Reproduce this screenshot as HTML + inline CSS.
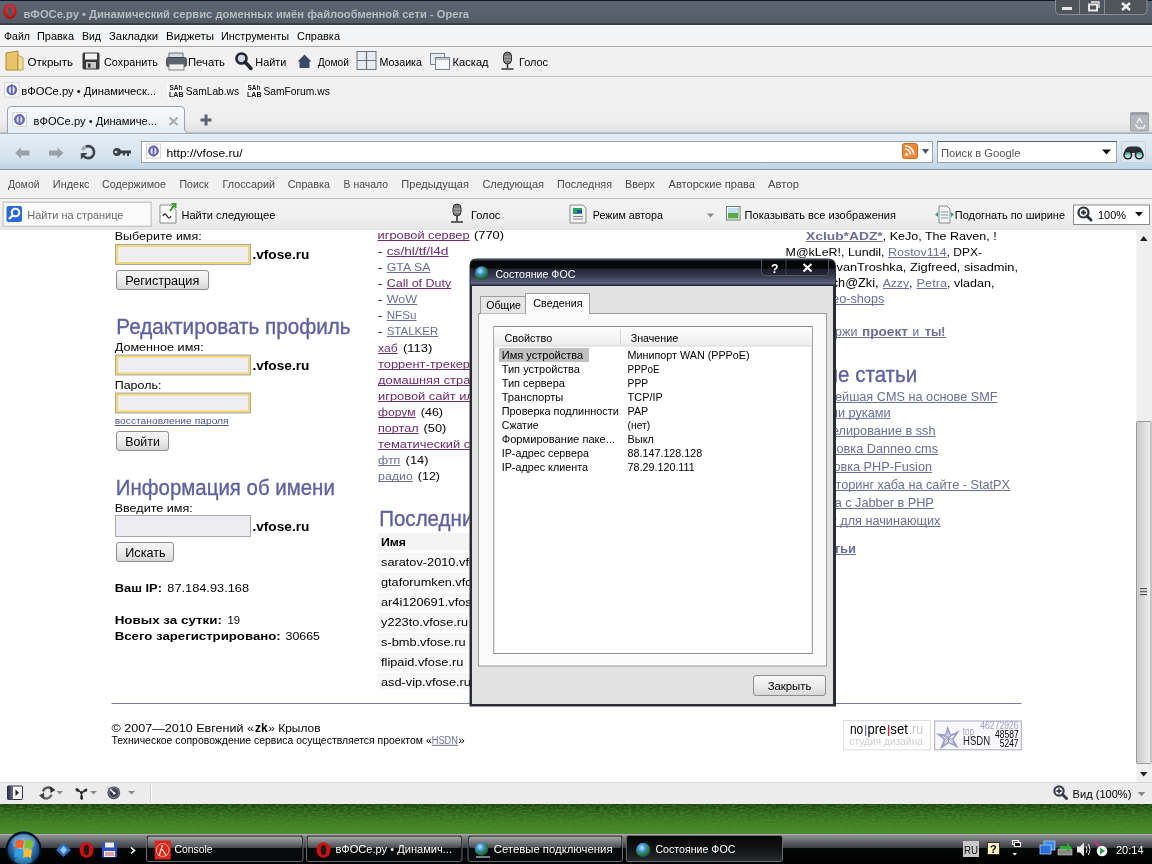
<!DOCTYPE html>
<html><head><meta charset="utf-8"><title>vfose</title>
<style>html,body{margin:0;padding:0;width:1152px;height:864px;overflow:hidden;background:#fff}svg{display:block;will-change:transform}text{font-family:"Liberation Sans",sans-serif;white-space:pre}</style>
</head><body><svg width="1152" height="864" viewBox="0 0 1152 864">
<defs>
<linearGradient id="gTitle" x1="0" y1="0" x2="0" y2="1"><stop offset="0" stop-color="#121a26"/><stop offset="0.045" stop-color="#121a26"/><stop offset="0.06" stop-color="#5c6672"/><stop offset="0.5" stop-color="#58616d"/><stop offset="0.92" stop-color="#525a66"/><stop offset="0.94" stop-color="#3c4046"/><stop offset="1" stop-color="#3c4046"/></linearGradient>
<linearGradient id="gAddr" x1="0" y1="0" x2="0" y2="1"><stop offset="0" stop-color="#e4edf5"/><stop offset="0.6" stop-color="#d8e5ef"/><stop offset="1" stop-color="#bdd3e4"/></linearGradient>
<linearGradient id="gTabBar" x1="0" y1="0" x2="0" y2="1"><stop offset="0" stop-color="#f1f1f1"/><stop offset="0.6" stop-color="#eeeeee"/><stop offset="1" stop-color="#dedede"/></linearGradient>
<linearGradient id="gTab" x1="0" y1="0" x2="0" y2="1"><stop offset="0" stop-color="#fafafa"/><stop offset="1" stop-color="#e4edf5"/></linearGradient>
<linearGradient id="gDesk" x1="0" y1="0" x2="0" y2="1"><stop offset="0" stop-color="#1a4010"/><stop offset="0.25" stop-color="#2c6018"/><stop offset="0.6" stop-color="#3f7e22"/><stop offset="1" stop-color="#4c8e2c"/></linearGradient>
<filter id="fGrass" x="0" y="0" width="100%" height="100%"><feTurbulence type="fractalNoise" baseFrequency="0.25 0.6" numOctaves="3" seed="7"/><feColorMatrix values="0 0 0 0 0.08  0 0 0 0 0.25  0 0 0 0 0.04  0 0 0 -3 1.9"/></filter>
<linearGradient id="gTask" x1="0" y1="0" x2="0" y2="1"><stop offset="0" stop-color="#9a9ca2"/><stop offset="0.1" stop-color="#808388"/><stop offset="0.45" stop-color="#3c3e43"/><stop offset="0.48" stop-color="#060708"/><stop offset="1" stop-color="#000"/></linearGradient>
<linearGradient id="gTBtn" x1="0" y1="0" x2="0" y2="1"><stop offset="0" stop-color="#6d7077"/><stop offset="0.5" stop-color="#45484e"/><stop offset="0.52" stop-color="#1a1c1f"/><stop offset="1" stop-color="#121315"/></linearGradient>
<linearGradient id="gDlgTitle" x1="0" y1="0" x2="0" y2="1"><stop offset="0" stop-color="#5a5e72"/><stop offset="0.06" stop-color="#06070c"/><stop offset="0.3" stop-color="#080906"/><stop offset="0.38" stop-color="#25263a"/><stop offset="0.6" stop-color="#33384a"/><stop offset="0.9" stop-color="#5e6382"/><stop offset="0.96" stop-color="#3a3c48"/><stop offset="1" stop-color="#15161a"/></linearGradient>
<linearGradient id="gBtn" x1="0" y1="0" x2="0" y2="1"><stop offset="0" stop-color="#f8f8f8"/><stop offset="0.5" stop-color="#ececec"/><stop offset="1" stop-color="#d6d6d6"/></linearGradient>
<linearGradient id="gHdr" x1="0" y1="0" x2="0" y2="1"><stop offset="0" stop-color="#ffffff"/><stop offset="1" stop-color="#ececec"/></linearGradient>
<linearGradient id="gThumb" x1="0" y1="0" x2="1" y2="0"><stop offset="0" stop-color="#c8c8c8"/><stop offset="0.5" stop-color="#dcdcdc"/><stop offset="1" stop-color="#f0f0f0"/></linearGradient>
<radialGradient id="gGlobe" cx="0.4" cy="0.35" r="0.7"><stop offset="0" stop-color="#bfe6ff"/><stop offset="0.4" stop-color="#3a8fd0"/><stop offset="0.7" stop-color="#2e7a2e"/><stop offset="1" stop-color="#0c3a6a"/></radialGradient>
<radialGradient id="gOrb" cx="0.5" cy="0.4" r="0.6"><stop offset="0" stop-color="#9fd6f5"/><stop offset="0.6" stop-color="#2a6fb0"/><stop offset="1" stop-color="#0c2a4a"/></radialGradient>
<radialGradient id="gOpera" cx="0.5" cy="0.4" r="0.6"><stop offset="0" stop-color="#ff5050"/><stop offset="1" stop-color="#b00000"/></radialGradient>
<linearGradient id="gTBtnTop" x1="0" y1="0" x2="0" y2="1"><stop offset="0" stop-color="#a8aaae"/><stop offset="1" stop-color="#45474b"/></linearGradient>
<linearGradient id="gPanel" x1="0" y1="0" x2="1" y2="0"><stop offset="0" stop-color="#2a2e48"/><stop offset="1" stop-color="#6a6e90"/></linearGradient>
<linearGradient id="gTBtnAct" x1="0" y1="0" x2="0" y2="1"><stop offset="0" stop-color="#050505"/><stop offset="0.6" stop-color="#151618"/><stop offset="1" stop-color="#2a2b2e"/></linearGradient>
<linearGradient id="gFind" x1="0" y1="0" x2="0" y2="1"><stop offset="0" stop-color="#f2f2f2"/><stop offset="0.6" stop-color="#f0f0f0"/><stop offset="1" stop-color="#e6e6e6"/></linearGradient>
<linearGradient id="gLens" x1="0" y1="0" x2="0" y2="1"><stop offset="0" stop-color="#2a9a88"/><stop offset="1" stop-color="#f0fffa"/></linearGradient>
</defs>
<rect x="0" y="0" width="1152" height="864" fill="#ffffff" />
<text x="114.7" y="240" font-size="11.5" fill="#000" textLength="87.0" lengthAdjust="spacingAndGlyphs" >Выберите имя:</text>
<rect x="115" y="244" width="136" height="21" fill="#a9a9a9" />
<rect x="116" y="245" width="134" height="19" fill="#f3d675" />
<rect x="118" y="247" width="130" height="15" fill="#eeeef3" />
<text x="252.4" y="259" font-size="13" fill="#000" font-weight="bold" textLength="57.0" lengthAdjust="spacingAndGlyphs" >.vfose.ru</text>
<rect x="116.5" y="270.5" width="92" height="19" rx="2.5" fill="url(#gBtn)" stroke="#8e8e8e"/>
<text x="125.3" y="284.7" font-size="12" fill="#000" textLength="74.0" lengthAdjust="spacingAndGlyphs" >Регистрация</text>
<text x="116.3" y="333.5" font-size="21.4" fill="#5f619f" textLength="234.3" lengthAdjust="spacingAndGlyphs" stroke="#5f619f" stroke-width="0.35">Редактировать профиль</text>
<text x="114.7" y="350.7" font-size="11.5" fill="#000" textLength="89.0" lengthAdjust="spacingAndGlyphs" >Доменное имя:</text>
<rect x="115" y="354.5" width="136" height="21" fill="#a9a9a9" />
<rect x="116" y="355.5" width="134" height="19" fill="#f3d675" />
<rect x="118" y="357.5" width="130" height="15" fill="#eeeef3" />
<text x="252.4" y="369.5" font-size="13" fill="#000" font-weight="bold" textLength="57.0" lengthAdjust="spacingAndGlyphs" >.vfose.ru</text>
<text x="114.7" y="389" font-size="11.5" fill="#000" textLength="46.7" lengthAdjust="spacingAndGlyphs" >Пароль:</text>
<rect x="115" y="392.5" width="136" height="21" fill="#a9a9a9" />
<rect x="116" y="393.5" width="134" height="19" fill="#f3d675" />
<rect x="118" y="395.5" width="130" height="15" fill="#eeeef3" />
<text x="114.7" y="424" font-size="9" fill="#50538a" textLength="114.0" lengthAdjust="spacingAndGlyphs" >восстановление пароля</text>
<rect x="114.7" y="425" width="114" height="1" fill="#50538a" />
<rect x="116.5" y="431.5" width="52" height="19" rx="2.5" fill="url(#gBtn)" stroke="#8e8e8e"/>
<text x="125.3" y="445.5" font-size="12" fill="#000" textLength="34.5" lengthAdjust="spacingAndGlyphs" >Войти</text>
<text x="115.8" y="494.8" font-size="21.4" fill="#5f619f" textLength="219.0" lengthAdjust="spacingAndGlyphs" stroke="#5f619f" stroke-width="0.35">Информация об имени</text>
<text x="114.7" y="511.5" font-size="11.5" fill="#000" textLength="78.0" lengthAdjust="spacingAndGlyphs" >Введите имя:</text>
<rect x="115" y="515" width="136" height="22" fill="#a9a9a9" />
<rect x="116" y="516" width="134" height="20" fill="#ededf1" />
<text x="252.4" y="531" font-size="13" fill="#000" font-weight="bold" textLength="57.0" lengthAdjust="spacingAndGlyphs" >.vfose.ru</text>
<rect x="116.5" y="542.5" width="57" height="19" rx="2.5" fill="url(#gBtn)" stroke="#8e8e8e"/>
<text x="125.3" y="556.6" font-size="12" fill="#000" textLength="40.2" lengthAdjust="spacingAndGlyphs" >Искать</text>
<text x="114.7" y="592" font-size="11.5" fill="#000" font-weight="bold" textLength="47.3" lengthAdjust="spacingAndGlyphs" >Ваш IP:</text>
<text x="167.3" y="592" font-size="11.5" fill="#000" textLength="81.7" lengthAdjust="spacingAndGlyphs" >87.184.93.168</text>
<text x="114.7" y="623.7" font-size="11.5" fill="#000" font-weight="bold" textLength="107.3" lengthAdjust="spacingAndGlyphs" >Новых за сутки:</text>
<text x="227.5" y="623.7" font-size="11.5" fill="#000" textLength="12.5" lengthAdjust="spacingAndGlyphs" >19</text>
<text x="114.7" y="639.5" font-size="11.5" fill="#000" font-weight="bold" textLength="166.0" lengthAdjust="spacingAndGlyphs" >Всего зарегистрировано:</text>
<text x="285.5" y="639.5" font-size="11.5" fill="#000" textLength="34.5" lengthAdjust="spacingAndGlyphs" >30665</text>
<text x="377.6" y="239.2" font-size="11.5" fill="#6e2a72" textLength="92.0" lengthAdjust="spacingAndGlyphs" >игровой сервер</text>
<rect x="377.6" y="240" width="92" height="1" fill="#6e2a72" />
<text x="474" y="239.2" font-size="11.5" fill="#000" textLength="30.0" lengthAdjust="spacingAndGlyphs" >(770)</text>
<text x="378" y="255.2" font-size="11.5" fill="#000" textLength="4.5" lengthAdjust="spacingAndGlyphs" >-</text>
<text x="386.7" y="255.2" font-size="11.5" fill="#6e2a72" textLength="61.8" lengthAdjust="spacingAndGlyphs" >cs/hl/tf/l4d</text>
<rect x="386.7" y="256" width="61.8" height="1" fill="#6e2a72" />
<text x="378" y="271" font-size="11.5" fill="#000" textLength="4.5" lengthAdjust="spacingAndGlyphs" >-</text>
<text x="386.7" y="271" font-size="11.5" fill="#6b6e9b" textLength="43.7" lengthAdjust="spacingAndGlyphs" >GTA SA</text>
<rect x="386.7" y="272" width="43.7" height="1" fill="#6b6e9b" />
<text x="378" y="287" font-size="11.5" fill="#000" textLength="4.5" lengthAdjust="spacingAndGlyphs" >-</text>
<text x="386.7" y="287" font-size="11.5" fill="#6e2a72" textLength="64.5" lengthAdjust="spacingAndGlyphs" >Call of Duty</text>
<rect x="386.7" y="288" width="64.5" height="1" fill="#6e2a72" />
<text x="378" y="303" font-size="11.5" fill="#000" textLength="4.5" lengthAdjust="spacingAndGlyphs" >-</text>
<text x="386.7" y="303" font-size="11.5" fill="#6b6e9b" textLength="30.5" lengthAdjust="spacingAndGlyphs" >WoW</text>
<rect x="386.7" y="304" width="30.5" height="1" fill="#6b6e9b" />
<text x="378" y="319" font-size="11.5" fill="#000" textLength="4.5" lengthAdjust="spacingAndGlyphs" >-</text>
<text x="386.7" y="319" font-size="11.5" fill="#6b6e9b" textLength="29.8" lengthAdjust="spacingAndGlyphs" >NFSu</text>
<rect x="386.7" y="320" width="29.8" height="1" fill="#6b6e9b" />
<text x="378" y="335" font-size="11.5" fill="#000" textLength="4.5" lengthAdjust="spacingAndGlyphs" >-</text>
<text x="386.7" y="335" font-size="11.5" fill="#6b6e9b" textLength="51.6" lengthAdjust="spacingAndGlyphs" >STALKER</text>
<rect x="386.7" y="336" width="51.6" height="1" fill="#6b6e9b" />
<text x="378" y="351.7" font-size="11.5" fill="#6e2a72" textLength="19.6" lengthAdjust="spacingAndGlyphs" >хаб</text>
<rect x="378" y="353" width="19.6" height="1" fill="#6e2a72" />
<text x="403" y="351.7" font-size="11.5" fill="#000" textLength="29.4" lengthAdjust="spacingAndGlyphs" >(113)</text>
<text x="378" y="367.7" font-size="11.5" fill="#6e2a72" textLength="118.5" lengthAdjust="spacingAndGlyphs" >торрент-трекер (99)</text>
<rect x="378" y="369" width="95" height="1" fill="#6e2a72" />
<text x="378" y="383.6" font-size="11.5" fill="#6e2a72" textLength="147.6" lengthAdjust="spacingAndGlyphs" >домашняя страница (80)</text>
<rect x="378" y="385" width="95" height="1" fill="#6e2a72" />
<text x="378" y="399.6" font-size="11.5" fill="#6e2a72" textLength="160.7" lengthAdjust="spacingAndGlyphs" >игровой сайт или клан (60)</text>
<rect x="378" y="401" width="95" height="1" fill="#6e2a72" />
<text x="378" y="415.6" font-size="11.5" fill="#6e2a72" textLength="37.5" lengthAdjust="spacingAndGlyphs" >форум</text>
<rect x="378" y="417" width="37.5" height="1" fill="#6e2a72" />
<text x="420.8" y="415.6" font-size="11.5" fill="#000" textLength="22.2" lengthAdjust="spacingAndGlyphs" >(46)</text>
<text x="378" y="431.6" font-size="11.5" fill="#6e2a72" textLength="40.5" lengthAdjust="spacingAndGlyphs" >портал</text>
<rect x="378" y="433" width="40.5" height="1" fill="#6e2a72" />
<text x="423.5" y="431.6" font-size="11.5" fill="#000" textLength="22.8" lengthAdjust="spacingAndGlyphs" >(50)</text>
<text x="378" y="447.6" font-size="11.5" fill="#6e2a72" textLength="138.9" lengthAdjust="spacingAndGlyphs" >тематический сайт (40)</text>
<rect x="378" y="449" width="95" height="1" fill="#6e2a72" />
<text x="378" y="463.6" font-size="11.5" fill="#6b6e9b" textLength="22.3" lengthAdjust="spacingAndGlyphs" >фтп</text>
<rect x="378" y="465" width="22.3" height="1" fill="#6b6e9b" />
<text x="405.6" y="463.6" font-size="11.5" fill="#000" textLength="22.9" lengthAdjust="spacingAndGlyphs" >(14)</text>
<text x="378" y="479.6" font-size="11.5" fill="#6b6e9b" textLength="34.8" lengthAdjust="spacingAndGlyphs" >радио</text>
<rect x="378" y="481" width="34.8" height="1" fill="#6b6e9b" />
<text x="417.8" y="479.6" font-size="11.5" fill="#000" textLength="22.2" lengthAdjust="spacingAndGlyphs" >(12)</text>
<text x="379.2" y="525.5" font-size="21.4" fill="#5f619f" textLength="230.3" lengthAdjust="spacingAndGlyphs" stroke="#5f619f" stroke-width="0.35">Последние регистрации</text>
<rect x="378" y="533" width="380" height="17" fill="#f4f4f4" />
<text x="381" y="545.7" font-size="11.5" fill="#000" font-weight="bold" textLength="25.0" lengthAdjust="spacingAndGlyphs" >Имя</text>
<rect x="378" y="553" width="380" height="17" fill="#f7f7f7" />
<text x="381" y="566" font-size="11.5" fill="#000" textLength="123.4" lengthAdjust="spacingAndGlyphs">saratov-2010.vfose.ru</text>
<rect x="378" y="573" width="380" height="17" fill="#f7f7f7" />
<text x="381" y="586" font-size="11.5" fill="#000" transform="translate(381,0) scale(1.11,1) translate(-381,0)">gtaforumken.vfose.ru</text>
<rect x="378" y="593" width="380" height="17" fill="#f7f7f7" />
<text x="381" y="606" font-size="11.5" fill="#000" transform="translate(381,0) scale(1.11,1) translate(-381,0)">ar4i120691.vfose.ru</text>
<rect x="378" y="613" width="380" height="17" fill="#f7f7f7" />
<text x="381" y="626" font-size="11.5" fill="#000" textLength="87.2" lengthAdjust="spacingAndGlyphs">y223to.vfose.ru</text>
<rect x="378" y="633" width="380" height="17" fill="#f7f7f7" />
<text x="381" y="646" font-size="11.5" fill="#000" textLength="84.5" lengthAdjust="spacingAndGlyphs">s-bmb.vfose.ru</text>
<rect x="378" y="653" width="380" height="17" fill="#f7f7f7" />
<text x="381" y="666" font-size="11.5" fill="#000" textLength="82.3" lengthAdjust="spacingAndGlyphs">flipaid.vfose.ru</text>
<rect x="378" y="673" width="380" height="17" fill="#f7f7f7" />
<text x="381" y="686" font-size="11.5" fill="#000" transform="translate(381,0) scale(1.11,1) translate(-381,0)">asd-vip.vfose.ru</text>
<rect x="111.5" y="703" width="910" height="1" fill="#7a7a9a" />
<text x="111.5" y="732" font-size="11.5" fill="#000" textLength="142.5" lengthAdjust="spacingAndGlyphs" >© 2007—2010 Евгений «</text>
<text x="255" y="732" font-size="12" fill="#000" font-weight="bold" textLength="12.7" lengthAdjust="spacingAndGlyphs" >zk</text>
<text x="268.3" y="732" font-size="11.5" fill="#000" textLength="52.2" lengthAdjust="spacingAndGlyphs" >» Крылов</text>
<text x="111.5" y="743.8" font-size="10" fill="#000" textLength="320.2" lengthAdjust="spacingAndGlyphs" >Техническое сопровождение сервиса осуществляется проектом «</text>
<text x="431.7" y="743.8" font-size="10" fill="#6b6e9b" textLength="26.3" lengthAdjust="spacingAndGlyphs" >HSDN</text>
<text x="458.2" y="743.8" font-size="10" fill="#000" textLength="6.5" lengthAdjust="spacingAndGlyphs" >»</text>
<rect x="431.7" y="744.8" width="26.3" height="1" fill="#6b6e9b" />
<text x="806" y="239.5" font-size="11.5" fill="#6b6e9b" font-weight="bold" textLength="76.7" lengthAdjust="spacingAndGlyphs" >Xclub*ADZ*</text>
<rect x="806" y="241" width="76.7" height="1" fill="#6b6e9b" />
<text x="882.7" y="239.5" font-size="11.5" fill="#000" textLength="114.0" lengthAdjust="spacingAndGlyphs" >, KeJo, The Raven, !</text>
<text x="785.6" y="256" font-size="11.5" fill="#000" textLength="102.4" lengthAdjust="spacingAndGlyphs" >M@kLeR!, Lundil, </text>
<text x="888" y="256" font-size="11.5" fill="#6b6e9b" textLength="58.6" lengthAdjust="spacingAndGlyphs" >Rostov114</text>
<rect x="888" y="257" width="58.6" height="1" fill="#6b6e9b" />
<text x="946.6" y="256" font-size="11.5" fill="#000" textLength="35.4" lengthAdjust="spacingAndGlyphs" >, DPX-</text>
<text x="836.5" y="271" font-size="11.5" fill="#000" textLength="181.5" lengthAdjust="spacingAndGlyphs" >vanTroshka, Zigfreed, sisadmin,</text>
<text x="882" y="287" font-size="12.7" fill="#000" text-anchor="end" >Scratch@Zki, </text>
<text x="882.7" y="287" font-size="11.5" fill="#6b6e9b" textLength="26.3" lengthAdjust="spacingAndGlyphs" >Azzy</text>
<rect x="882.7" y="288" width="26.3" height="1" fill="#6b6e9b" />
<text x="909" y="287" font-size="11.5" fill="#000" textLength="7.0" lengthAdjust="spacingAndGlyphs" >, </text>
<text x="916.6" y="287" font-size="11.5" fill="#6b6e9b" textLength="30.4" lengthAdjust="spacingAndGlyphs" >Petra</text>
<rect x="916.6" y="288" width="30.4" height="1" fill="#6b6e9b" />
<text x="947" y="287" font-size="11.5" fill="#000" textLength="47.4" lengthAdjust="spacingAndGlyphs" >, vladan,</text>
<text x="884.3" y="303" font-size="12.7" fill="#6b6e9b" text-anchor="end" >video-shops</text>
<rect x="800" y="304" width="84.3" height="1" fill="#6b6e9b" />
<text x="857.4" y="335.5" font-size="12.5" fill="#6b6e9b" text-anchor="end" >Поддержи</text>
<text x="862" y="335.5" font-size="13" fill="#6b6e9b" font-weight="bold" textLength="45.9" lengthAdjust="spacingAndGlyphs" >проект</text>
<text x="912.6" y="335.5" font-size="12" fill="#6b6e9b" textLength="6.7" lengthAdjust="spacingAndGlyphs" >и</text>
<text x="925" y="335.5" font-size="13" fill="#6b6e9b" font-weight="bold" textLength="20.4" lengthAdjust="spacingAndGlyphs" >ты!</text>
<rect x="800" y="337" width="146" height="1" fill="#6b6e9b" />
<text x="917.2" y="381.5" font-size="21.4" fill="#5f619f" text-anchor="end" textLength="173.3" lengthAdjust="spacingAndGlyphs" stroke="#5f619f" stroke-width="0.35">Последние статьи</text>
<text x="997.5" y="401" font-size="12.7" fill="#6b6e9b" text-anchor="end" >Простейшая CMS на основе SMF</text>
<rect x="800" y="402" width="197.5" height="1" fill="#6b6e9b" />
<text x="890.5" y="416.8" font-size="12.7" fill="#6b6e9b" text-anchor="end" >своими руками</text>
<rect x="800" y="417.8" width="90.5" height="1" fill="#6b6e9b" />
<text x="935.5" y="435" font-size="12.7" fill="#6b6e9b" text-anchor="end" >Туннелирование в ssh</text>
<rect x="800" y="436" width="135.5" height="1" fill="#6b6e9b" />
<text x="938" y="453" font-size="12.7" fill="#6b6e9b" text-anchor="end" >Установка Danneo cms</text>
<rect x="800" y="454" width="138" height="1" fill="#6b6e9b" />
<text x="932" y="471" font-size="12.7" fill="#6b6e9b" text-anchor="end" >Установка PHP-Fusion</text>
<rect x="800" y="472" width="132" height="1" fill="#6b6e9b" />
<text x="1010" y="489" font-size="12.7" fill="#6b6e9b" text-anchor="end" >Мониторинг хаба на сайте - StatPX</text>
<rect x="800" y="490" width="210" height="1" fill="#6b6e9b" />
<text x="933.8" y="507" font-size="12.7" fill="#6b6e9b" text-anchor="end" >Работа с Jabber в PHP</text>
<rect x="800" y="508" width="133.79999999999995" height="1" fill="#6b6e9b" />
<text x="940.4" y="525" font-size="12.7" fill="#6b6e9b" text-anchor="end" >PHP для начинающих</text>
<rect x="800" y="526" width="140.39999999999998" height="1" fill="#6b6e9b" />
<text x="856" y="553" font-size="13" fill="#6b6e9b" text-anchor="end" font-weight="bold" >Все статьи</text>
<rect x="800" y="554" width="56" height="1" fill="#6b6e9b" />
<rect x="843" y="720" width="88" height="30.3" fill="#dedede" />
<rect x="844" y="721" width="86" height="28.3" fill="#ffffff" />
<text x="849.9" y="733.9" font-size="14" fill="#000" textLength="13.3" lengthAdjust="spacingAndGlyphs" >no</text>
<rect x="865" y="725" width="1.3" height="11" fill="#6a6cc0" />
<text x="867.5" y="733.9" font-size="14" fill="#000" textLength="18.8" lengthAdjust="spacingAndGlyphs" >pre</text>
<rect x="888" y="725" width="1.3" height="11" fill="#d02030" />
<text x="890.3" y="733.9" font-size="14" fill="#000" textLength="17.6" lengthAdjust="spacingAndGlyphs" >set</text>
<text x="908.7" y="733.9" font-size="14" fill="#c8c8c8" textLength="14.3" lengthAdjust="spacingAndGlyphs" >.ru</text>
<text x="849.3" y="744.8" font-size="10" fill="#d0d0d0" textLength="73.7" lengthAdjust="spacingAndGlyphs" >студия дизайна</text>
<rect x="934.2" y="720.5" width="87.6" height="29.8" fill="#a8aac8" />
<rect x="935.2" y="721.5" width="85.6" height="27.8" fill="#f8f8fc" />
<g transform="translate(948.6,738.4)" stroke="#9a9ccc" stroke-width="1.6" fill="none" stroke-linejoin="miter"><path d="M-1,-10 L2,-3 L9,-6 L4,1 L8,8 L0,4 L-7,9 L-4,1 L-10,-4 L-3,-3 Z"/><path d="M-1,-10 L0,4 M9,-6 L-4,1 M8,8 L-3,-3 M-7,9 L2,-3 M-10,-4 L4,1" stroke-width="1"/></g>
<text x="962.7" y="735.2" font-size="10" fill="#a8a8b8" textLength="11.2" lengthAdjust="spacingAndGlyphs" >top</text>
<text x="963" y="745.2" font-size="12.5" fill="#222" textLength="27.2" lengthAdjust="spacingAndGlyphs" >HSDN</text>
<text x="980.3" y="729.1" font-size="11" fill="#a0a2cc" textLength="38.3" lengthAdjust="spacingAndGlyphs" >46272926</text>
<text x="995" y="738.4" font-size="11" fill="#000" textLength="23.6" lengthAdjust="spacingAndGlyphs" >48587</text>
<text x="999.7" y="747.1" font-size="11" fill="#000" textLength="18.9" lengthAdjust="spacingAndGlyphs" >5247</text>
<path d="M469.5,706.5 L469.5,265.5 Q469.5,258.5 476.5,258.5 L828,258.5 Q836,258.5 836,266.5 L836,706.5 Z" fill="#2a2c33"/>
<path d="M470.5,286 L470.5,265.5 Q470.5,259.5 476.5,259.5 L828,259.5 Q835,259.5 835,266.5 L835,286 Z" fill="url(#gDlgTitle)"/>
<rect x="472" y="286" width="361" height="418" fill="#e2e2e2" />
<circle cx="481.7" cy="273" r="6.8" fill="url(#gGlobe)"/>
<text x="495.4" y="278" font-size="11.5" fill="#ffffff" textLength="80.0" lengthAdjust="spacingAndGlyphs" >Состояние ФОС</text>
<path d="M761.5,259 L761.5,272 Q761.5,275.5 765,275.5 L825,275.5 Q828.5,275.5 828.5,272 L828.5,259" fill="#000" fill-opacity="0.25" stroke="#4e5262"/>
<line x1="786" y1="260" x2="786" y2="275" stroke="#3e4250" stroke-width="1" />
<text x="771" y="272.5" font-size="12" fill="#fff" font-weight="bold" textLength="7.5" lengthAdjust="spacingAndGlyphs" >?</text>
<path d="M803.5,264 L811.5,271.5 M811.5,264 L803.5,271.5" stroke="#fff" stroke-width="2.2"/>
<rect x="478" y="313" width="349" height="353.5" fill="#9d9d9d" />
<rect x="479" y="314" width="347" height="351.5" fill="#fbfbfb" />
<path d="M480.5,313.5 L480.5,296.5 L525.5,296.5 L525.5,313.5" fill="#e6e6e6" stroke="#9d9d9d"/>
<text x="486.3" y="308.5" font-size="11.5" fill="#000" textLength="34.7" lengthAdjust="spacingAndGlyphs" >Общие</text>
<path d="M525.5,314 L525.5,293.5 L589.5,293.5 L589.5,314" fill="#fbfbfb" stroke="#9d9d9d"/>
<rect x="526" y="312" width="63" height="3" fill="#fbfbfb" />
<text x="533.3" y="306.5" font-size="11.5" fill="#000" textLength="49.2" lengthAdjust="spacingAndGlyphs" >Сведения</text>
<rect x="493.3" y="326" width="319.5" height="328" fill="#8e8e8e" />
<rect x="494.3" y="327" width="317.5" height="326" fill="#ffffff" />
<rect x="494.3" y="327" width="317.5" height="19" fill="url(#gHdr)"/>
<rect x="494.3" y="345.5" width="317.5" height="1" fill="#d8d8d8" />
<rect x="620" y="329" width="1" height="16" fill="#d6d6d6" />
<text x="504.4" y="341.5" font-size="11.5" fill="#000" textLength="47.9" lengthAdjust="spacingAndGlyphs" >Свойство</text>
<text x="630.7" y="341.5" font-size="11.5" fill="#000" textLength="47.5" lengthAdjust="spacingAndGlyphs" >Значение</text>
<rect x="499" y="348" width="90" height="14" fill="#c1c1c1" />
<text x="501.7" y="358.6" font-size="11" fill="#000" textLength="81.5" lengthAdjust="spacingAndGlyphs" >Имя устройства</text>
<text x="627.6" y="358.6" font-size="11" fill="#000" textLength="121.9" lengthAdjust="spacingAndGlyphs" >Минипорт WAN (PPPoE)</text>
<text x="501.7" y="372.6" font-size="11" fill="#000" textLength="78.3" lengthAdjust="spacingAndGlyphs" >Тип устройства</text>
<text x="627.6" y="372.6" font-size="11" fill="#000" textLength="32.0" lengthAdjust="spacingAndGlyphs" >PPPoE</text>
<text x="501.7" y="386.6" font-size="11" fill="#000" textLength="63.2" lengthAdjust="spacingAndGlyphs" >Тип сервера</text>
<text x="627.6" y="386.6" font-size="11" fill="#000" textLength="20.6" lengthAdjust="spacingAndGlyphs" >PPP</text>
<text x="501.7" y="400.6" font-size="11" fill="#000" textLength="61.6" lengthAdjust="spacingAndGlyphs" >Транспорты</text>
<text x="627.6" y="400.6" font-size="11" fill="#000" textLength="35.2" lengthAdjust="spacingAndGlyphs" >TCP/IP</text>
<text x="501.7" y="414.6" font-size="11" fill="#000" textLength="117.1" lengthAdjust="spacingAndGlyphs" >Проверка подлинности</text>
<text x="627.6" y="414.6" font-size="11" fill="#000" textLength="20.6" lengthAdjust="spacingAndGlyphs" >PAP</text>
<text x="501.7" y="428.6" font-size="11" fill="#000" textLength="36.9" lengthAdjust="spacingAndGlyphs" >Сжатие</text>
<text x="627.6" y="428.6" font-size="11" fill="#000" textLength="22.7" lengthAdjust="spacingAndGlyphs" >(нет)</text>
<text x="501.7" y="442.6" font-size="11" fill="#000" textLength="113.4" lengthAdjust="spacingAndGlyphs" >Формирование паке...</text>
<text x="627.6" y="442.6" font-size="11" fill="#000" textLength="26.3" lengthAdjust="spacingAndGlyphs" >Выкл</text>
<text x="501.7" y="456.6" font-size="11" fill="#000" textLength="87.2" lengthAdjust="spacingAndGlyphs" >IP-адрес сервера</text>
<text x="627.6" y="456.6" font-size="11" fill="#000" textLength="74.6" lengthAdjust="spacingAndGlyphs" >88.147.128.128</text>
<text x="501.7" y="470.6" font-size="11" fill="#000" textLength="86.3" lengthAdjust="spacingAndGlyphs" >IP-адрес клиента</text>
<text x="627.6" y="470.6" font-size="11" fill="#000" textLength="67.1" lengthAdjust="spacingAndGlyphs" >78.29.120.111</text>
<rect x="753.5" y="675.5" width="72" height="20" rx="2.5" fill="url(#gBtn)" stroke="#8e8e8e"/>
<text x="767.7" y="689.7" font-size="11.5" fill="#000" textLength="43.6" lengthAdjust="spacingAndGlyphs" >Закрыть</text>
<rect x="0" y="0" width="1152" height="25" fill="url(#gTitle)" />
<ellipse cx="10" cy="11.5" rx="6.5" ry="7.5" fill="url(#gOpera)"/><ellipse cx="10" cy="11.5" rx="2.6" ry="5" fill="#52565e"/>
<text x="23.5" y="18" font-size="11" fill="#b8bcc2" font-weight="bold" textLength="445.5" lengthAdjust="spacingAndGlyphs" >вФОСе.ру • Динамический сервис доменных имён файлообменной сети - Opera</text>
<path d="M1055.5,0 L1055.5,10.5 Q1055.5,14.5 1059.5,14.5 L1143,14.5 Q1147,14.5 1147,10.5 L1147,0" fill="#50545b" stroke="#8a8d93"/>
<line x1="1079.5" y1="0" x2="1079.5" y2="14" stroke="#8a8d93" stroke-width="1" />
<line x1="1104.5" y1="0" x2="1104.5" y2="14" stroke="#8a8d93" stroke-width="1" />
<rect x="1062" y="7" width="10" height="3" fill="#e8e8e8" />
<rect x="1089" y="4.5" width="8" height="6" fill="none" stroke="#e8e8e8" stroke-width="2"/><path d="M1091,2 L1099,2 L1099,8" fill="none" stroke="#e8e8e8" stroke-width="1.3"/>
<path d="M1122,3 L1130,10 M1130,3 L1122,10" stroke="#f0f0f0" stroke-width="2.4"/>
<rect x="0" y="25" width="1152" height="21" fill="#f3f4f5" />
<rect x="0" y="25" width="1152" height="1" fill="#fcfdff" />
<rect x="0" y="46" width="1152" height="1" fill="#a8a8a8" />
<text x="4" y="39.5" font-size="11" fill="#000" textLength="26.0" lengthAdjust="spacingAndGlyphs" >Файл</text>
<text x="37" y="39.5" font-size="11" fill="#000" textLength="37.0" lengthAdjust="spacingAndGlyphs" >Правка</text>
<text x="82" y="39.5" font-size="11" fill="#000" textLength="19.0" lengthAdjust="spacingAndGlyphs" >Вид</text>
<text x="109" y="39.5" font-size="11" fill="#000" textLength="49.0" lengthAdjust="spacingAndGlyphs" >Закладки</text>
<text x="166" y="39.5" font-size="11" fill="#000" textLength="48.0" lengthAdjust="spacingAndGlyphs" >Виджеты</text>
<text x="221" y="39.5" font-size="11" fill="#000" textLength="68.0" lengthAdjust="spacingAndGlyphs" >Инструменты</text>
<text x="297" y="39.5" font-size="11" fill="#000" textLength="43.0" lengthAdjust="spacingAndGlyphs" >Справка</text>
<rect x="0" y="47" width="1152" height="29" fill="#f1f1f1" />
<rect x="0" y="76" width="1152" height="1" fill="#c2c2c2" />
<text x="27.5" y="66" font-size="11" fill="#000" textLength="45.5" lengthAdjust="spacingAndGlyphs" >Открыть</text>
<text x="104" y="66" font-size="11" fill="#000" textLength="54.0" lengthAdjust="spacingAndGlyphs" >Сохранить</text>
<text x="188" y="66" font-size="11" fill="#000" textLength="37.0" lengthAdjust="spacingAndGlyphs" >Печать</text>
<text x="255.3" y="66" font-size="11" fill="#000" textLength="31.1" lengthAdjust="spacingAndGlyphs" >Найти</text>
<text x="317.8" y="66" font-size="11" fill="#000" textLength="31.2" lengthAdjust="spacingAndGlyphs" >Домой</text>
<text x="379.4" y="66" font-size="11" fill="#000" textLength="42.6" lengthAdjust="spacingAndGlyphs" >Мозаика</text>
<text x="452.5" y="66" font-size="11" fill="#000" textLength="36.1" lengthAdjust="spacingAndGlyphs" >Каскад</text>
<text x="519" y="66" font-size="11" fill="#000" textLength="29.0" lengthAdjust="spacingAndGlyphs" >Голос</text>
<path d="M6,53 L18,51 L18,70 L6,70 Z" fill="#e8c36a" stroke="#b08a30"/><path d="M18,55 L23,58 L23,70 L18,70 Z" fill="#f4dc92" stroke="#b08a30" stroke-width="0.8"/>
<rect x="82.5" y="52.5" width="17" height="17" rx="1.5" fill="#3a3a3a"/><rect x="85" y="53.5" width="12" height="6" fill="#f2f2f2"/><rect x="86" y="62" width="10" height="6.5" fill="#c9c9c9"/><rect x="88" y="63.5" width="2.5" height="4" fill="#333"/>
<rect x="169" y="53" width="14" height="5" fill="#d8dde2" stroke="#555" stroke-width="0.8"/><rect x="166.5" y="57.5" width="20" height="9" rx="2" fill="#5a6470" stroke="#333" stroke-width="0.8"/><rect x="169" y="64" width="15" height="6" fill="#eef0f2" stroke="#666" stroke-width="0.8"/>
<circle cx="241.5" cy="58.5" r="5" fill="#cfd8e8" stroke="#1e2530" stroke-width="2.6"/><path d="M245,62 L251,68.5" stroke="#1e2530" stroke-width="3.5" stroke-linecap="round"/>
<path d="M297.5,61.5 L304.5,54.5 L311.5,61.5 L309.5,61.5 L309.5,68 L299.5,68 L299.5,61.5 Z" fill="#3b4a6a"/>
<rect x="357" y="51.5" width="19" height="18" fill="#e8ebf0" stroke="#6b7280"/><path d="M357,60.5 L376,60.5 M366.5,51.5 L366.5,69.5" stroke="#6b7280" stroke-width="1.2"/>
<rect x="430.5" y="53.5" width="14" height="11" fill="#e8ebf0" stroke="#7b8290"/><rect x="435.5" y="57.5" width="14" height="12" fill="#f4f6f8" stroke="#7b8290"/><rect x="436" y="58" width="13" height="2" fill="#b9c2cf"/>
<rect x="503.5" y="52" width="8" height="12" rx="4" fill="#777" stroke="#333"/><path d="M504,57 L511,57 M504,60 L511,60" stroke="#ccc" stroke-width="0.8"/><path d="M507.5,64 L507.5,68 M501.5,69 L513.5,69" stroke="#333" stroke-width="1.6"/>
<rect x="0" y="77" width="1152" height="28" fill="#f1f1f1" />
<rect x="4.5" y="82.5" width="14.5" height="14.5" fill="#fff" stroke="#d4d4dc"/><circle cx="11.8" cy="89.8" r="5.4" fill="#6466b2"/><ellipse cx="11.8" cy="89.8" rx="3" ry="3.6" fill="#e4e4ff"/><rect x="10.8" y="84.3" width="1.8" height="10.8" fill="#6466b2"/>
<text x="21.2" y="94.5" font-size="11" fill="#000" textLength="135.0" lengthAdjust="spacingAndGlyphs" >вФОСе.ру • Динамическ...</text>
<rect x="167" y="82.5" width="17" height="16" fill="#fafafa" />
<text x="169.5" y="90" font-size="7.5" fill="#222" font-weight="bold" textLength="13.0" lengthAdjust="spacingAndGlyphs" >SAh</text>
<text x="169" y="97" font-size="7.5" fill="#111" font-weight="bold" textLength="14.5" lengthAdjust="spacingAndGlyphs" >LAB</text>
<text x="185.8" y="94.5" font-size="11" fill="#000" textLength="53.2" lengthAdjust="spacingAndGlyphs" >SamLab.ws</text>
<rect x="245" y="82.5" width="17" height="16" fill="#fafafa" />
<text x="247.5" y="90" font-size="7.5" fill="#222" font-weight="bold" textLength="13.0" lengthAdjust="spacingAndGlyphs" >SAh</text>
<text x="247" y="97" font-size="7.5" fill="#111" font-weight="bold" textLength="14.5" lengthAdjust="spacingAndGlyphs" >LAB</text>
<text x="263.4" y="94.5" font-size="11" fill="#000" textLength="66.4" lengthAdjust="spacingAndGlyphs" >SamForum.ws</text>
<rect x="0" y="105" width="1152" height="28" fill="url(#gTabBar)" />
<path d="M0.5,133 L7.5,133 L7.5,110 Q7.5,106.5 11,106.5 L181,106.5 Q184.5,106.5 184.5,110 L184.5,128 Q184.5,133 190,133 L1152,133" fill="url(#gTab)" stroke="#9aa4ae"/>
<rect x="0" y="133" width="8" height="1" fill="#a9b6c2" />
<rect x="12.5" y="112.5" width="14" height="14" fill="#fff" stroke="#d4d4dc"/><circle cx="19.5" cy="119.5" r="5.4" fill="#6466b2"/><ellipse cx="19.5" cy="119.5" rx="3" ry="3.6" fill="#e4e4ff"/><rect x="18.6" y="114.1" width="1.8" height="10.8" fill="#6466b2"/>
<text x="33.5" y="124.5" font-size="11" fill="#000" textLength="123.5" lengthAdjust="spacingAndGlyphs" >вФОСе.ру • Динамиче...</text>
<path d="M169.5,117.5 L177.5,125 M177.5,117.5 L169.5,125" stroke="#a8acb2" stroke-width="2"/>
<path d="M206,114.5 L206,125.5 M200.5,120 L211.5,120" stroke="#5b6270" stroke-width="3"/>
<rect x="1130.5" y="112.5" width="18" height="18.5" rx="1" fill="#b4b8bd" stroke="#9ea2a8"/><rect x="1131" y="113" width="17" height="2" fill="#9a9ea4"/><path d="M1137,123 L1139.5,118.5 L1142,123 M1135.5,124.5 L1138,128 L1143.5,128 L1145,125" fill="none" stroke="#eef0f2" stroke-width="1.5"/>
<rect x="0" y="133" width="1152" height="37" fill="url(#gAddr)" />
<rect x="0" y="133" width="1152" height="1" fill="#a3b1bd" />
<rect x="0" y="169" width="1152" height="1" fill="#8795a2" />
<path d="M15,153 L21,147.5 L21,150.5 L29.5,150.5 L29.5,155.5 L21,155.5 L21,158.5 Z" fill="#9aa1a8"/>
<path d="M63.5,153 L57.5,147.5 L57.5,150.5 L49,150.5 L49,155.5 L57.5,155.5 L57.5,158.5 Z" fill="#9aa1a8"/>
<path d="M82.5,150 A6,6 0 1 1 83.5,156" fill="none" stroke="#3c434c" stroke-width="2.6"/><path d="M82.2,150 A6,6 0 0 1 86,146.5" fill="none" stroke="#a8b0b8" stroke-width="2.4"/><path d="M80.8,153 L87.5,153 L80.8,159.5 Z" fill="#3c434c"/>
<circle cx="117" cy="152" r="4" fill="#394049"/><path d="M120,150.5 L131,150.5 L131,153.5 L129,153.5 L129,156 L127,156 L127,153.5 L125,153.5 L125,155.5 L123,155.5 L123,153.5 L120,153.5 Z" fill="#394049"/><circle cx="116" cy="152" r="1.3" fill="#d8e0e8"/>
<rect x="141" y="141" width="792" height="22" fill="#98a4ae" />
<rect x="142" y="142" width="790" height="20" fill="#ffffff" />
<rect x="146.5" y="144" width="14" height="14" fill="#fff" stroke="#d4d4dc"/><circle cx="153.5" cy="151.0" r="5.4" fill="#6466b2"/><ellipse cx="153.5" cy="151.0" rx="3" ry="3.6" fill="#e4e4ff"/><rect x="152.6" y="145.6" width="1.8" height="10.8" fill="#6466b2"/>
<text x="166.6" y="156.5" font-size="11.5" fill="#000" textLength="76.0" lengthAdjust="spacingAndGlyphs" >http://vfose.ru/</text>
<rect x="902.5" y="143.5" width="15" height="15" rx="2" fill="#f0883a" stroke="#c86a20"/><circle cx="906.5" cy="154.5" r="1.5" fill="#fff"/><path d="M905,149 A5.5,5.5 0 0 1 910.5,154.5 M905,145.8 A8.7,8.7 0 0 1 913.7,154.5" fill="none" stroke="#fff" stroke-width="1.6"/>
<path d="M922,149 L929,149 L925.5,154 Z" fill="#4a5866"/>
<rect x="937" y="141" width="180" height="22" fill="#98a4ae" />
<rect x="937" y="141" width="180" height="1" fill="#5a646c" />
<rect x="938" y="142" width="178" height="20" fill="#ffffff" />
<text x="941" y="156.5" font-size="11.5" fill="#555" textLength="79.5" lengthAdjust="spacingAndGlyphs" >Поиск в Google</text>
<path d="M1102,149.5 L1111,149.5 L1106.5,154.5 Z" fill="#111"/>
<rect x="1121.5" y="141.5" width="24" height="21" rx="1" fill="#dde7ef" stroke="#c8d2da"/><path d="M1124,153 Q1125,147 1130,146.5 L1137,146.5 Q1142,147 1143,153 Z" fill="#2a2e34"/><circle cx="1127.8" cy="155" r="4.6" fill="#22262a"/><circle cx="1139.2" cy="155" r="4.6" fill="#22262a"/><circle cx="1127.8" cy="155" r="3" fill="url(#gLens)"/><circle cx="1139.2" cy="155" r="3" fill="url(#gLens)"/>
<rect x="0" y="170" width="1152" height="28" fill="#f1f1f1" />
<rect x="0" y="198" width="1152" height="1" fill="#bdbdbd" />
<text x="8" y="188" font-size="11" fill="#4a4a4a" textLength="31.4" lengthAdjust="spacingAndGlyphs" >Домой</text>
<text x="52.8" y="188" font-size="11" fill="#4a4a4a" textLength="36.7" lengthAdjust="spacingAndGlyphs" >Индекс</text>
<text x="102" y="188" font-size="11" fill="#4a4a4a" textLength="64.0" lengthAdjust="spacingAndGlyphs" >Содержимое</text>
<text x="179.5" y="188" font-size="11" fill="#4a4a4a" textLength="29.2" lengthAdjust="spacingAndGlyphs" >Поиск</text>
<text x="222.6" y="188" font-size="11" fill="#4a4a4a" textLength="52.4" lengthAdjust="spacingAndGlyphs" >Глоссарий</text>
<text x="287.8" y="188" font-size="11" fill="#4a4a4a" textLength="42.2" lengthAdjust="spacingAndGlyphs" >Справка</text>
<text x="343.6" y="188" font-size="11" fill="#4a4a4a" textLength="44.4" lengthAdjust="spacingAndGlyphs" >В начало</text>
<text x="401.3" y="188" font-size="11" fill="#4a4a4a" textLength="67.7" lengthAdjust="spacingAndGlyphs" >Предыдущая</text>
<text x="482.4" y="188" font-size="11" fill="#4a4a4a" textLength="61.6" lengthAdjust="spacingAndGlyphs" >Следующая</text>
<text x="557" y="188" font-size="11" fill="#4a4a4a" textLength="55.0" lengthAdjust="spacingAndGlyphs" >Последняя</text>
<text x="625" y="188" font-size="11" fill="#4a4a4a" textLength="30.0" lengthAdjust="spacingAndGlyphs" >Вверх</text>
<text x="668.5" y="188" font-size="11" fill="#4a4a4a" textLength="86.5" lengthAdjust="spacingAndGlyphs" >Авторские права</text>
<text x="768" y="188" font-size="11" fill="#4a4a4a" textLength="31.0" lengthAdjust="spacingAndGlyphs" >Автор</text>
<rect x="0" y="199" width="1152" height="31" fill="url(#gFind)" />
<rect x="2.6" y="201.7" width="149" height="25" fill="#b8b8b8" />
<rect x="3.6" y="202.7" width="147" height="23" fill="#fbfbfb" />
<rect x="6.5" y="206" width="15.5" height="16" rx="2" fill="#2a6ad8"/><circle cx="15.5" cy="212.5" r="3.8" fill="none" stroke="#fff" stroke-width="2"/><path d="M12.5,215.5 L9,219" stroke="#fff" stroke-width="2.4"/>
<text x="27.3" y="219" font-size="11.5" fill="#6a6a6a" textLength="96.0" lengthAdjust="spacingAndGlyphs" >Найти на странице</text>
<path d="M160,205 L171,205 L176,210 L176,223 L160,223 Z" fill="#fff" stroke="#8a8a8a"/><path d="M163,216 Q165,212 167,216 Q169,220 171,216" fill="none" stroke="#333" stroke-width="1.4"/><path d="M170,211 L175,204 M171.5,204 L175.5,204 L175.5,208" stroke="#3aa030" stroke-width="2" fill="none"/>
<text x="181.5" y="219" font-size="11.5" fill="#000" textLength="93.8" lengthAdjust="spacingAndGlyphs" >Найти следующее</text>
<rect x="453" y="204" width="8" height="12" rx="4" fill="#777" stroke="#333"/><path d="M453.5,209 L460.5,209 M453.5,212 L460.5,212" stroke="#ccc" stroke-width="0.8"/><path d="M457,216 L457,221 M451,222 L463,222" stroke="#333" stroke-width="1.6"/>
<text x="471" y="219" font-size="11.5" fill="#000" textLength="29.3" lengthAdjust="spacingAndGlyphs" >Голос</text>
<path d="M570,205 L583,205 L586,208 L586,223 L570,223 Z" fill="#f4f4f4" stroke="#8a8a8a"/><rect x="573" y="208" width="9" height="6" fill="#2aa060"/><rect x="577" y="210" width="5" height="3" fill="#2050a0"/><path d="M573,216.5 L583,216.5 M573,219 L583,219" stroke="#888"/>
<text x="592.8" y="219" font-size="11.5" fill="#000" textLength="70.2" lengthAdjust="spacingAndGlyphs" >Режим автора</text>
<path d="M707,213.5 L714,213.5 L710.5,217.5 Z" fill="#888"/>
<rect x="726.5" y="206.5" width="13.5" height="13.5" fill="#fff" stroke="#6a7a6a"/><rect x="728" y="208" width="10.5" height="10.5" fill="#5aaa4a"/><rect x="728" y="208" width="10.5" height="5" fill="#bfe0ef"/>
<text x="744.6" y="219" font-size="11.5" fill="#000" textLength="151.4" lengthAdjust="spacingAndGlyphs" >Показывать все изображения</text>
<path d="M939,206 L947,206 L950,209 L950,223 L939,223 Z" fill="#f4f4f4" stroke="#8a8a8a"/><path d="M935,214.5 L938,212 L938,217 Z M954,214.5 L951,212 L951,217 Z" fill="#3a9a8a"/><path d="M941,212 L948,212 M941,215 L948,215 M941,218 L948,218" stroke="#7a9a9a"/>
<text x="954.8" y="219" font-size="11.5" fill="#000" textLength="110.2" lengthAdjust="spacingAndGlyphs" >Подогнать по ширине</text>
<rect x="1073" y="204.5" width="77" height="20.5" fill="#8a8a8a" />
<rect x="1074" y="205.5" width="75" height="18.5" fill="#ffffff" />
<circle cx="1083.5" cy="212.5" r="5" fill="#fff" stroke="#2a3038" stroke-width="2.2"/><path d="M1081,212.5 L1086,212.5 M1083.5,210 L1083.5,215" stroke="#2a3038" stroke-width="1.8"/><path d="M1087,216 L1091,220" stroke="#2a3038" stroke-width="3" stroke-linecap="round"/>
<text x="1098" y="219" font-size="11.5" fill="#000" textLength="28.0" lengthAdjust="spacingAndGlyphs" >100%</text>
<path d="M1135,212 L1143,212 L1139,216.5 Z" fill="#111"/>
<rect x="1136" y="230" width="16" height="552" fill="#efefef" />
<rect x="1136" y="230" width="1" height="552" fill="#f6f6f6" />
<path d="M1140,241 L1147.5,241 L1143.7,236 Z" fill="#222"/>
<path d="M1140,772 L1147.5,772 L1143.7,776.5 Z" fill="#222"/>
<rect x="1136.5" y="421.5" width="14.5" height="342" rx="1" fill="url(#gThumb)" stroke="#9a9a9a"/>
<path d="M1140,588.7 L1147,588.7 M1140,591.7 L1147,591.7 M1140,594.6 L1147,594.6" stroke="#444" stroke-width="1"/>
<rect x="0" y="782" width="1152" height="22" fill="#ececec" />
<rect x="0" y="782" width="1152" height="1" fill="#dadada" />
<rect x="7.5" y="786" width="15" height="13.5" rx="1" fill="#f4f4f4" stroke="#2a2d40"/><rect x="7.5" y="786" width="5.5" height="13.5" fill="url(#gPanel)"/><path d="M15.5,789.5 L19,792.7 L15.5,796 Z" fill="#222"/>
<path d="M43,791.5 A5.5,5.5 0 0 1 52.5,789.5" fill="none" stroke="#555" stroke-width="2.4"/><path d="M50,786.5 L55.5,790 L50.5,793 Z" fill="#333"/>
<path d="M51.5,794.5 A5.5,5.5 0 0 1 42,796.5" fill="none" stroke="#666" stroke-width="2.4"/><path d="M44.5,799.5 L39,795.5 L44,792.5 Z" fill="#444"/>
<path d="M56.5,791 L63,791 L59.75,794.5 Z" fill="#8a8a8a"/>
<circle cx="81.5" cy="792.5" r="1.6" fill="#222"/><path d="M81,792 Q77,786 75.5,789 Q75,792.5 81,792 Z" fill="#333"/><path d="M82,792 Q86,786.5 87.5,789.5 Q87.5,792.5 82,792.5 Z" fill="#333"/><path d="M81.5,793 Q79,798.5 81.5,800 Q84.5,799.5 81.5,793 Z" fill="#222"/>
<path d="M90,791 L97,791 L93.5,794.5 Z" fill="#8a8a8a"/>
<circle cx="113.8" cy="792.8" r="6.4" fill="#3e4250"/><circle cx="113.8" cy="792.8" r="5" fill="none" stroke="#9aa0b0" stroke-width="0.8"/><path d="M110.2,789.2 L114.5,793.5" stroke="#fff" stroke-width="1.5"/><circle cx="114.2" cy="793.2" r="1.2" fill="#fff"/>
<path d="M128,791 L135,791 L131.5,794.5 Z" fill="#8a8a8a"/>
<rect x="150" y="785" width="1" height="17" fill="#d0d0d0" />
<rect x="151" y="785" width="1" height="17" fill="#fafafa" />
<circle cx="1059" cy="791" r="4.6" fill="#fff" stroke="#3a3e48" stroke-width="2.2"/><path d="M1056.5,791 L1061.5,791 M1059,788.5 L1059,793.5" stroke="#3a3e48" stroke-width="1.8"/><path d="M1062.5,794.5 L1066.5,798.5" stroke="#3a3e48" stroke-width="3" stroke-linecap="round"/>
<text x="1072.6" y="798.2" font-size="11.5" fill="#000" textLength="58.8" lengthAdjust="spacingAndGlyphs" >Вид (100%)</text>
<path d="M1137.7,792 L1145.4,792 L1141.5,796.2 Z" fill="#8a8a8a"/>
<rect x="0" y="804" width="1152" height="31" fill="url(#gDesk)" />
<rect x="0" y="804" width="1152" height="31" filter="url(#fGrass)" opacity="0.5"/>

<rect x="0" y="834" width="1152" height="30" fill="url(#gTask)" />
<rect x="0" y="834" width="1152" height="1" fill="#a8aaae" />
<circle cx="23.6" cy="849.5" r="18" fill="#06101c"/><circle cx="23.6" cy="849.5" r="16" fill="url(#gOrb)"/><ellipse cx="23.6" cy="842" rx="12" ry="7.5" fill="#ffffff" opacity="0.22"/><ellipse cx="23.6" cy="860" rx="9" ry="4" fill="#60d0ff" opacity="0.35"/>
<path d="M16,841 Q20,838.5 24,841 L23,849 Q19,846.5 15,849 Z" fill="#f06030"/><path d="M25,841 Q29,838.5 33,841 L32,849 Q28,846.5 24,849 Z" fill="#80c030"/><path d="M15,850 Q19,847.5 23,850 L22,858 Q18,855.5 14,858 Z" fill="#30a0e8"/><path d="M24,850 Q28,847.5 32,850 L31,858 Q27,855.5 23,858 Z" fill="#f8c030"/>
<path d="M63.5,843 L71,850 L63.5,857 L56,850 Z" fill="#2a70c8"/><path d="M63.5,846 L67,850 L63.5,854 L60,850 Z" fill="#8fc8ff"/>
<ellipse cx="86.5" cy="850" rx="7" ry="7.8" fill="#d01010"/><ellipse cx="86.5" cy="850" rx="2.8" ry="5.2" fill="#1a1a1a"/>
<rect x="102" y="842.5" width="15" height="15" fill="#3050c8"/><rect x="105" y="842.5" width="9" height="5" fill="#eee"/><rect x="104" y="851" width="11" height="6" fill="#f0f0f0"/><path d="M105,853 L114,853 M105,855 L114,855" stroke="#c03030" stroke-width="0.8"/>
<path d="M131,847.5 L134.5,850.5 L131,853.5" fill="none" stroke="#fff" stroke-width="1.6"/>
<rect x="146.5" y="835.5" width="156.5" height="26" rx="2.5" fill="#08090a" stroke="#6a6d72"/>
<rect x="147.5" y="836.5" width="154.5" height="11.5" rx="2" fill="url(#gTBtnTop)"/>
<rect x="154.7" y="840.5" width="16" height="19" fill="#d8281e"/><circle cx="162.7" cy="850" r="6.5" fill="none" stroke="#ffa090" stroke-width="1"/><path d="M159,856 L162.5,845 M162,849 L166.5,856" stroke="#ffd8c8" stroke-width="1.3"/>
<text x="174.4" y="852.5" font-size="11.5" fill="#fff" textLength="38.1" lengthAdjust="spacingAndGlyphs" >Console</text>
<rect x="306.5" y="835.5" width="155.5" height="26" rx="2.5" fill="#08090a" stroke="#6a6d72"/>
<rect x="307.5" y="836.5" width="153.5" height="11.5" rx="2" fill="url(#gTBtnTop)"/>
<ellipse cx="323.5" cy="850" rx="7" ry="7.8" fill="#d01010"/><ellipse cx="323.5" cy="850" rx="2.8" ry="5.2" fill="#1a1a1a"/>
<text x="335.4" y="852.5" font-size="11.5" fill="#fff" textLength="116.6" lengthAdjust="spacingAndGlyphs" >вФОСе.ру • Динамич...</text>
<rect x="468.0" y="835.5" width="154.5" height="26" rx="2.5" fill="#08090a" stroke="#6a6d72"/>
<rect x="469.0" y="836.5" width="152.5" height="11.5" rx="2" fill="url(#gTBtnTop)"/>
<circle cx="481.5" cy="849" r="6.8" fill="url(#gGlobe)"/><path d="M476,857 L490,857" stroke="#9ab" stroke-width="1.5"/>
<text x="493.75" y="852.5" font-size="11.5" fill="#fff" textLength="118.8" lengthAdjust="spacingAndGlyphs" >Сетевые подключения</text>
<rect x="626.3" y="835.5" width="156.20000000000005" height="26" rx="2.5" fill="url(#gTBtnAct)" stroke="#6a6d72"/>
<circle cx="643.2" cy="850" r="7.2" fill="url(#gGlobe)"/>
<text x="655.4" y="852.5" font-size="11.5" fill="#fff" textLength="80.0" lengthAdjust="spacingAndGlyphs" >Состояние ФОС</text>
<rect x="963" y="841" width="16" height="16" fill="#c8c8c8" />
<text x="964" y="853.5" font-size="10.5" fill="#111" textLength="14.0" lengthAdjust="spacingAndGlyphs" >RU</text>
<rect x="987.5" y="842.5" width="12" height="12" fill="#fff6c0" stroke="#333"/><text x="990" y="853" font-size="11" font-weight="bold" fill="#000">?</text>
<rect x="1012.5" y="840.5" width="6" height="4" fill="none" stroke="#fff"/><rect x="1014.5" y="842.5" width="6" height="4" fill="#111" stroke="#fff"/><path d="M1012.5,853 L1017,853 L1014.75,855.5 Z" fill="#fff"/>
<rect x="1044" y="841" width="11" height="9" fill="#3a8ae8" stroke="#a8d0ff" stroke-width="0.8"/><rect x="1040" y="845" width="11" height="9" fill="#2a70d8" stroke="#a8d0ff" stroke-width="0.8"/>
<rect x="1058" y="849" width="14" height="6" fill="#888" stroke="#ccc" stroke-width="0.6"/><path d="M1060,846 L1067,846 L1067,843 L1072,848 L1067,852 L1067,849 L1060,849 Z" fill="#2ab030"/>
<path d="M1077,846.5 L1080,846.5 L1084,842.5 L1084,856.5 L1080,852.5 L1077,852.5 Z" fill="#e8e8e8"/><path d="M1086,846 Q1088,849.5 1086,853 M1088.5,844 Q1091.5,849.5 1088.5,855" fill="none" stroke="#e8e8e8" stroke-width="1"/>
<path d="M1094,841 L1101,848" stroke="#d03090" stroke-width="2"/><circle cx="1102" cy="851" r="5.3" fill="#fff"/><path d="M1100,847.5 L1105,851 L1100,854.5 Z" fill="#20a040"/>
<text x="1116" y="853.5" font-size="11.5" fill="#fff" textLength="27.5" lengthAdjust="spacingAndGlyphs" >20:14</text>
</svg></body></html>
